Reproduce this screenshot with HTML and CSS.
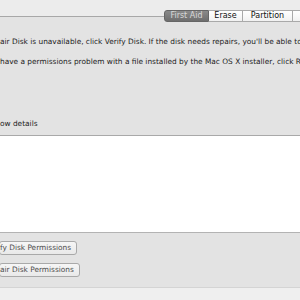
FILE: index.html
```html
<!DOCTYPE html>
<html>
<head>
  <meta charset="UTF-8">
  <title>Disk Utility - First Aid</title>
  <link rel="stylesheet" href="styles.css">
</head>
<body>
  <div class="pane">
    <div class="tab-strip">
      <div class="tabs">
        <span class="tab selected">First Aid</span>
        <span class="tab erase">Erase</span>
        <span class="tab partition">Partition</span>
        <span class="tab raid">RAID</span>
      </div>
    </div>
    <div class="info">
      <p>air Disk is unavailable, click Verify Disk. If the disk needs repairs, you'll be able to</p>
      <p>have a permissions problem with a file installed by the Mac OS X installer, click Repair</p>
    </div>
    <div class="details-row">ow details</div>
    <div class="log"></div>
    <div class="buttons">
      <button class="btn" type="button">fy Disk Permissions</button>
      <button class="btn" type="button">air Disk Permissions</button>
    </div>
    <div class="footer"></div>
  </div>
</body>
</html>
```

FILE: styles.css
```css
body {
  margin: 0;
  padding: 0;
  background: #e3e3e3;
  font-family: "DejaVu Sans", sans-serif;
  font-size: 7.4px;
  color: #1c1c1c;
  overflow: hidden;
}
.pane {
  width: 300px;
  height: 300px;
  display: flex;
  flex-direction: column;
  overflow: hidden;
}
.tab-strip {
  height: 16px;
  flex: none;
  background: #ececec;
  border-bottom: 1px solid #a8a8a8;
  position: relative;
}
.tabs {
  position: absolute;
  left: 164px;
  top: 10px;
  display: flex;
  white-space: nowrap;
}
.tab {
  box-sizing: border-box;
  height: 12px;
  line-height: 10px;
  text-align: center;
  background: linear-gradient(to bottom, #ffffff, #f1f1f1);
  border: 1px solid #a9a9a9;
  border-left: none;
  color: #111;
  font-size: 8px;
}
.tab.selected {
  width: 45px;
  background: linear-gradient(to bottom, #8a8a8a, #6e6e6e);
  border: 1px solid #666;
  border-radius: 3px 0 0 3px;
  color: #d8d8d8;
}
.tab.erase {
  width: 34px;
}
.tab.partition {
  width: 50px;
}
.tab.raid {
  width: 40px;
}
.info {
  padding-top: 19px;
  flex: none;
}
.info p {
  margin: 0 0 9px;
  white-space: nowrap;
  line-height: 11px;
}
.details-row {
  flex: none;
  margin-top: 42px;
  height: 12px;
  line-height: 12px;
  padding-bottom: 5px;
  border-bottom: 1px solid #a9a9a9;
  white-space: nowrap;
}
.log {
  flex: none;
  height: 96px;
  background: #fff;
  border-bottom: 1px solid #b3b3b3;
}
.buttons {
  flex: none;
  box-sizing: border-box;
  display: flex;
  flex-direction: column;
  align-items: flex-start;
  gap: 8px;
  padding-top: 8px;
  height: 55px;
  border-bottom: 1px solid #d4d4d4;
}
.btn {
  height: 14px;
  padding: 0 5px 0 0;
  margin-left: -1px;
  font-family: "DejaVu Sans", sans-serif;
  font-size: 7.4px;
  color: #4c4c4c;
  background: linear-gradient(to bottom, #f6f6f6, #e9e9e9);
  border: 1px solid #a9a9a9;
  border-radius: 3px;
  line-height: 12px;
  white-space: nowrap;
}
.footer {
  flex: 1;
  background: #efefef;
}
```
